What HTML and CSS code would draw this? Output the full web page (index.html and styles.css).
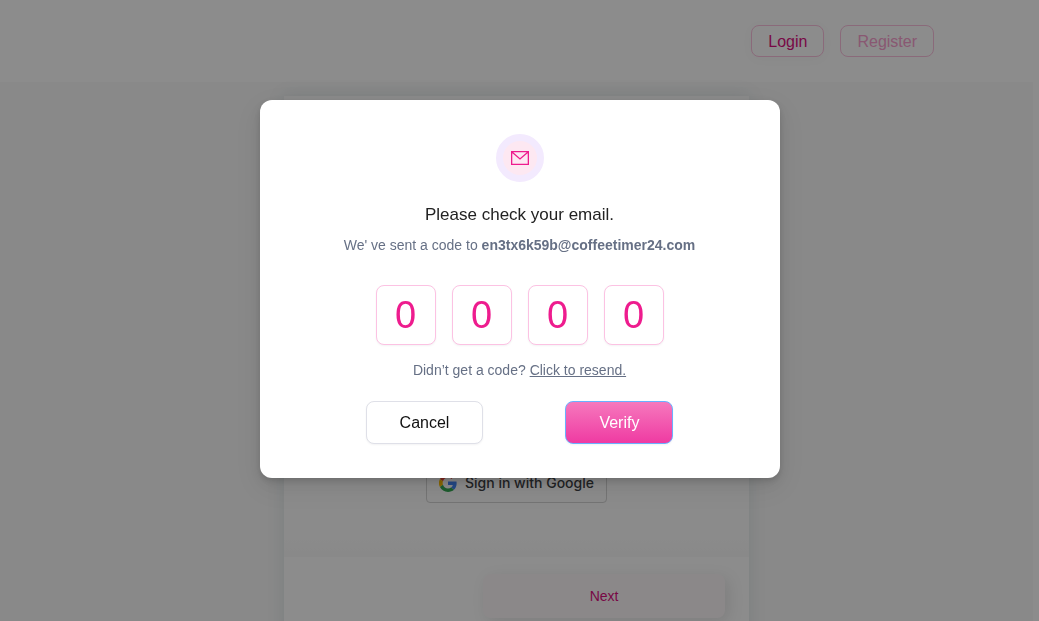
FILE: index.html
```html
<!DOCTYPE html>
<html lang="en">
<head>
<meta charset="utf-8">
<meta name="viewport" content="width=device-width, initial-scale=1">
<title>Verify your email</title>
<link rel="stylesheet" href="styles.css">
</head>
<body>
<div class="page">
  <header class="header">
    <button class="nav-button nav-button-active" type="button">Login</button>
    <button class="nav-button" type="button">Register</button>
  </header>
  <main class="main">
    <section class="card">
      <div class="card-body">
        <button class="google" type="button">
          <svg class="google-icon" viewBox="0 0 48 48" aria-hidden="true">
            <path fill="#ea4335" d="M24 9.500c3.500 0 6.700 1.200 9.200 3.600l6.900-6.900C35.900 2.400 30.500 0 24 0 14.600 0 6.500 5.400 2.600 13.200l8 6.200C12.400 13.700 17.700 9.500 24 9.500z"/>
            <path fill="#4285f4" d="M47 24.500c0-1.600-.2-3.100-.4-4.500H24v9h12.900c-.6 3-2.200 5.500-4.700 7.200l7.700 6C44.400 38 47 31.800 47 24.500z"/>
            <path fill="#fbbc05" d="M10.500 28.600a14.500 14.500 0 0 1 0-9.200l-8-6.200a24 24 0 0 0 0 21.600z"/>
            <path fill="#34a853" d="M24 48c6.500 0 11.900-2.100 15.900-5.800l-7.700-6c-2.200 1.500-4.900 2.300-8.200 2.300-6.300 0-11.600-4.200-13.500-9.900l-8 6.200C6.500 42.600 14.600 48 24 48z"/>
          </svg>
          <span>Sign in with Google</span>
        </button>
      </div>
      <footer class="card-footer">
        <button class="next" type="button">Next</button>
      </footer>
    </section>
  </main>
</div>

<div class="overlay">
  <form class="modal" role="dialog" aria-modal="true" aria-labelledby="modal-title">
    <span class="badge">
      <svg class="mail-icon" viewBox="0 0 18 14" aria-hidden="true">
        <path d="M.65.65h16.700v12.700H.65zM.65.65 9 8 17.350.65"/>
      </svg>
    </span>
    <h1 class="title" id="modal-title">Please check your email.</h1>
    <p class="sent">We' ve sent a code to <strong>en3tx6k59b@coffeetimer24.com</strong></p>
    <div class="code">
      <input class="digit" type="text" inputmode="numeric" maxlength="1" value="0" aria-label="Digit 1">
      <input class="digit" type="text" inputmode="numeric" maxlength="1" value="0" aria-label="Digit 2">
      <input class="digit" type="text" inputmode="numeric" maxlength="1" value="0" aria-label="Digit 3">
      <input class="digit" type="text" inputmode="numeric" maxlength="1" value="0" aria-label="Digit 4">
    </div>
    <p class="resend">Didn’t get a code? <a class="resend-link" href="#resend">Click to resend.</a></p>
    <div class="actions">
      <button class="action cancel" type="button">Cancel</button>
      <button class="action verify" type="submit">Verify</button>
    </div>
  </form>
</div>
</body>
</html>
```

FILE: styles.css
```css
* {
  box-sizing: border-box;
}

body {
  margin: 0;
  font-family: "Liberation Sans", Arial, sans-serif;
  background: #fff;
}

button,
input {
  font-family: inherit;
}

.page {
  height: 100vh;
  overflow: hidden;
}

.header {
  display: flex;
  justify-content: flex-end;
  gap: 16px;
  padding: 25px 105px;
}

.nav-button {
  height: 32px;
  padding: 2px 16px 0;
  font-size: 16px;
  color: #f9a0cf;
  background: #fff;
  border: 1px solid #fcc2df;
  border-radius: 8px;
}

.nav-button-active {
  color: #db0f7f;
  box-shadow: 0 2px 12px rgba(0, 0, 0, 0.03);
}

.main {
  display: flex;
  justify-content: center;
  margin-right: 6px;
  padding-top: 14px;
  background: #f9f9f9;
}

.card {
  width: 45%;
  min-width: 300px;
  background: #fff;
  box-shadow: 0 0 16px rgba(80, 130, 140, 0.16);
}

.card-body {
  display: flex;
  justify-content: center;
  padding: 366px 16px 54px;
  background: linear-gradient(#fdfdfd 96%, #f9f9f9);
}

.google {
  display: flex;
  align-items: center;
  gap: 8px;
  height: 41px;
  padding: 0 12px;
  font-family: Inter, Roboto, sans-serif;
  font-size: 14px;
  font-weight: 500;
  color: #3c4043;
  white-space: nowrap;
  background: #fdfdfd;
  border: 1px solid #d4d4d4;
  border-radius: 4px;
}

.google-icon {
  width: 18px;
  height: 18px;
}

.card-footer {
  display: flex;
  justify-content: flex-end;
  padding: 17px 24px;
}

.next {
  width: 58%;
  height: 44px;
  font-size: 14px;
  color: #db0f7f;
  background: #fef8fa;
  border: 0;
  border-radius: 8px;
  box-shadow: 4px 4px 16px rgba(0, 0, 0, 0.1);
}

.overlay {
  position: fixed;
  inset: 0;
  display: flex;
  justify-content: center;
  align-items: flex-start;
  padding: 100px 16px 16px;
  background: rgba(0, 0, 0, 0.45);
}

.modal {
  display: flex;
  flex-direction: column;
  align-items: center;
  width: 100%;
  max-width: 520px;
  padding: 34px 24px;
  background: #fff;
  border-radius: 12px;
  box-shadow: 0 6px 16px rgba(0, 0, 0, 0.08), 0 3px 6px rgba(0, 0, 0, 0.12), 0 9px 28px 8px rgba(0, 0, 0, 0.05);
}

.badge {
  display: grid;
  place-items: center;
  width: 48px;
  height: 48px;
  background: #fde8f2;
  border: 7px solid #f3eafe;
  border-radius: 50%;
}

.mail-icon {
  width: 18px;
  height: 14px;
  fill: none;
  stroke: #ee1c8e;
  stroke-width: 1.3;
}

.title {
  margin: 21px 0 0;
  font-size: 17px;
  font-weight: 400;
  line-height: 24px;
  color: #222;
}

.sent,
.resend {
  margin: 0;
  font-size: 14px;
  line-height: 20px;
  color: #667085;
}

.sent {
  margin-top: 8px;
}

.code {
  display: flex;
  gap: 16px;
  margin: 30px 0 15px;
}

.digit {
  width: 60px;
  height: 60px;
  padding: 0;
  font-size: 38px;
  text-align: center;
  color: #ee1c8e;
  background: #fff;
  border: 1px solid #fcc2e3;
  border-radius: 8px;
  box-shadow: 0 1px 2px rgba(16, 24, 40, 0.05);
}

.resend-link {
  color: inherit;
  text-underline-offset: 1px;
}

.actions {
  display: flex;
  gap: 82px;
  margin-top: 21px;
}

.action {
  height: 43px;
  padding: 0 33px;
  font-size: 16px;
  border-radius: 8px;
  box-shadow: 0 1px 2px rgba(16, 24, 40, 0.05);
}

.cancel {
  color: #111;
  background: #fff;
  border: 1px solid #dfe0e8;
}

.verify {
  color: #fff;
  background: linear-gradient(#f678bd, #ef3ba2);
  border: 1px solid #69b1ff;
}
```
